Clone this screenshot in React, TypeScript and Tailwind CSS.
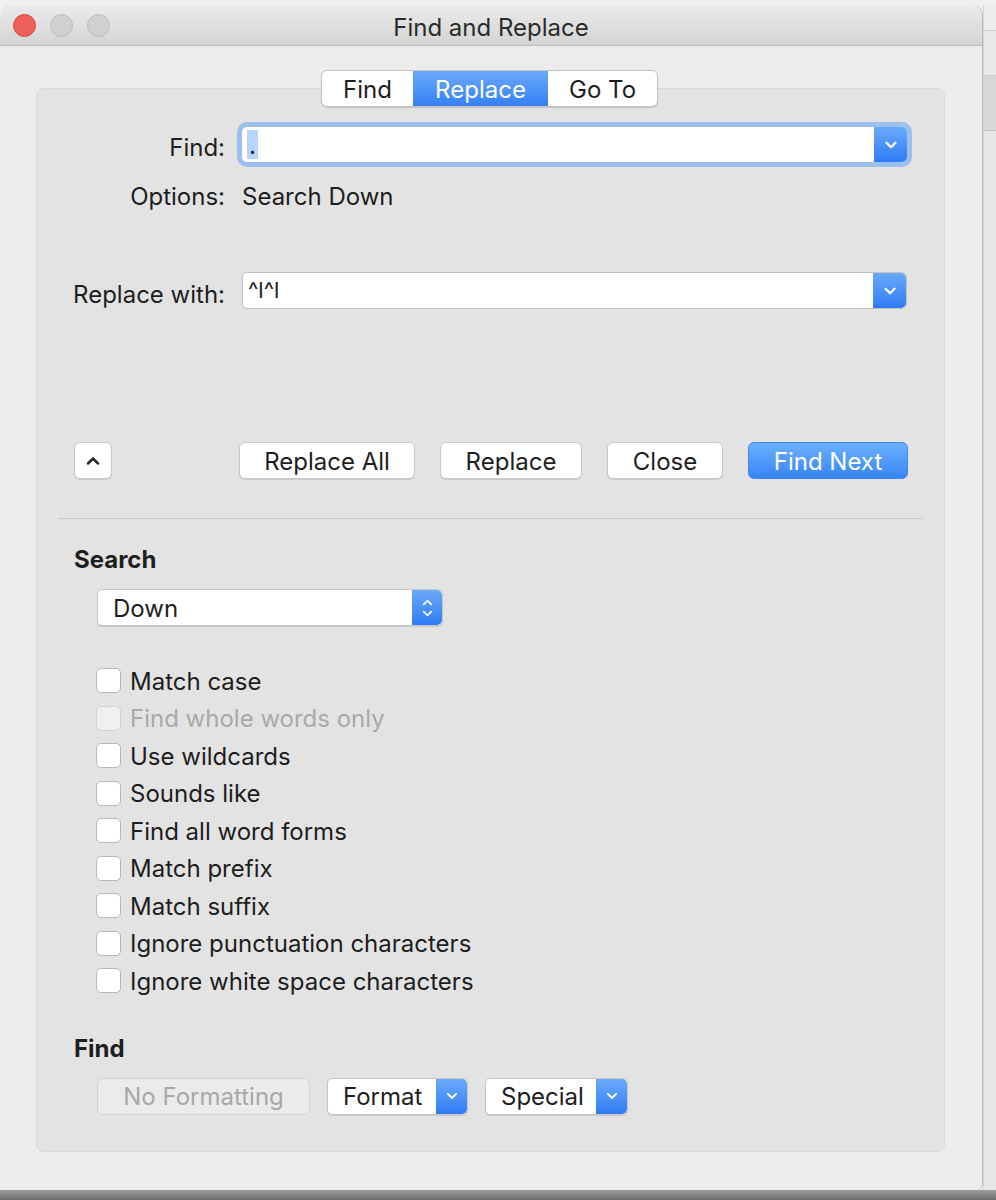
import { ChevronDown, ChevronUp } from "lucide-react"

const options = [
  { label: "Match case", disabled: false },
  { label: "Find whole words only", disabled: true },
  { label: "Use wildcards", disabled: false },
  { label: "Sounds like", disabled: false },
  { label: "Find all word forms", disabled: false },
  { label: "Match prefix", disabled: false },
  { label: "Match suffix", disabled: false },
  { label: "Ignore punctuation characters", disabled: false },
  { label: "Ignore white space characters", disabled: false },
]

function BlueChevron() {
  return (
    <div className="w-[33px] h-full flex items-center justify-center rounded-r-[5px] bg-gradient-to-b from-[#6aa9f9] to-[#2f7bf5]">
      <ChevronDown size={18} strokeWidth={3} className="text-white" />
    </div>
  )
}

function PushButton({ label, width }: { label: string; width: string }) {
  return (
    <button
      className={`${width} h-[37px] rounded-[6px] bg-white border border-[#c9c9c9] shadow-[0_1px_1px_rgba(0,0,0,0.12)] text-[24px] text-[#1e1e1e] flex items-center justify-center pt-[2px]`}
    >
      {label}
    </button>
  )
}

export default function App() {
  return (
    <div className="w-[996px] h-[1200px] bg-[#f0f0f0] overflow-hidden font-[Inter,sans-serif] text-[#1e1e1e]">

      <div className="flex pt-[5px]">

        {/* WINDOW */}

        <div className="w-[983px] h-[1185px] bg-[#ececec] rounded-t-[10px] rounded-br-[6px] border-r border-[#b8b8b8] flex flex-col">

          {/* Title bar */}

          <div className="h-[41px] rounded-t-[10px] bg-gradient-to-b from-[#ebebeb] to-[#d4d4d4] border-b border-[#bdbdbd] flex items-center relative">
            <div className="flex items-center gap-[14px] pl-[13px]">
              <span className="w-[23px] h-[23px] rounded-full bg-[#f0605a] border border-[#dc4b45]" />
              <span className="w-[23px] h-[23px] rounded-full bg-[#d0d0d0] border border-[#bdbdbd]" />
              <span className="w-[23px] h-[23px] rounded-full bg-[#d0d0d0] border border-[#bdbdbd]" />
            </div>
            <div className="absolute inset-0 flex items-center justify-center text-[24px] text-[#2b2b2b] pt-[5px]">
              Find and Replace
            </div>
          </div>

          {/* Tabs */}

          <div className="pt-[24px] flex justify-center relative z-10 -mb-[19px] pr-[3px]">
            <div className="flex h-[37px] rounded-[6px] border border-[#c4c4c4] bg-white shadow-[0_1px_1px_rgba(0,0,0,0.15)] overflow-hidden text-[24px]">
              <div className="w-[91px] flex items-center justify-center pt-[2px]">Find</div>
              <div className="w-[135px] flex items-center justify-center pt-[2px] text-white bg-gradient-to-b from-[#69a8f9] to-[#3580f6]">Replace</div>
              <div className="w-[109px] flex items-center justify-center pt-[2px]">Go To</div>
            </div>
          </div>

          {/* PANEL */}

          <div className="ml-[36px] w-[909px] h-[1064px] rounded-[8px] bg-[#e3e3e3] border border-[#d9d9d9] flex flex-col pt-[38px]">

            {/* Find */}

            <div className="flex items-center h-[35px]">
              <div className="w-[188px] text-right text-[24px] pt-[6px]">Find:</div>
              <div className="ml-[17px] w-[665px] h-[35px] flex rounded-[5px] bg-white shadow-[0_0_0_5px_#9dbfec]">
                <div className="flex-1 flex items-center pl-[5px]">
                  <span className="bg-[#b4d5fe] h-[29px] w-[11px] text-[24px] leading-[32px] pl-[2px]">.</span>
                </div>
                <BlueChevron />
              </div>
            </div>

            {/* Options */}

            <div className="flex items-center h-[28px] mt-[21px] text-[24px]">
              <div className="w-[188px] text-right">Options:</div>
              <div className="ml-[17px]">Search Down</div>
            </div>

            {/* Replace with */}

            <div className="flex items-center h-[37px] mt-[61px]">
              <div className="w-[188px] text-right text-[24px] pt-[9px]">Replace with:</div>
              <div className="ml-[17px] w-[665px] h-[37px] flex rounded-[5px] bg-white border border-[#c2c2c2]">
                <div className="flex-1 flex items-center pl-[5px] text-[22px]">^l^l</div>
                <BlueChevron />
              </div>
            </div>

            {/* Action buttons */}

            <div className="flex items-center mt-[133px] pl-[37px]">
              <button className="w-[38px] h-[37px] rounded-[6px] bg-white border border-[#c9c9c9] shadow-[0_1px_1px_rgba(0,0,0,0.12)] flex items-center justify-center">
                <ChevronUp size={20} strokeWidth={3} className="text-[#2a2a2a]" />
              </button>
              <div className="ml-[127px] flex gap-[25px]">
                <PushButton label="Replace All" width="w-[176px]" />
                <PushButton label="Replace" width="w-[142px]" />
                <PushButton label="Close" width="w-[116px]" />
                <button className="w-[160px] h-[37px] rounded-[6px] border border-[#3f86f0] bg-gradient-to-b from-[#6cb0fb] to-[#3784f7] text-white text-[24px] flex items-center justify-center pt-[2px]">
                  Find Next
                </button>
              </div>
            </div>

            {/* Separator */}

            <div className="mt-[39px] mx-[21px] h-[1px] bg-[#c8c8c8]" />

            {/* Search */}

            <div className="mt-[27px] pl-[37px] h-[28px] flex items-center text-[24px] font-bold">Search</div>

            <div className="mt-[15px] ml-[60px] w-[346px] h-[37px] flex rounded-[5px] bg-white border border-[#c6c6c6] shadow-[0_1px_1px_rgba(0,0,0,0.12)]">
              <div className="flex-1 flex items-center pl-[15px] pt-[2px] text-[24px]">Down</div>
              <div className="w-[30px] h-full flex flex-col items-center justify-center rounded-r-[5px] bg-gradient-to-b from-[#6aa9f9] to-[#2f7bf5]">
                <ChevronUp size={15} strokeWidth={2.5} className="text-white -mb-[2px]" />
                <ChevronDown size={15} strokeWidth={2.5} className="text-white -mt-[2px]" />
              </div>
            </div>

            {/* Checkboxes */}

            <div className="mt-[36px] flex flex-col">
              {options.map((opt) => (
                <div key={opt.label} className="h-[37.5px] flex items-center pl-[59px]">
                  <span
                    className={`w-[25px] h-[25px] rounded-[5px] border ${
                      opt.disabled ? "bg-[#efefef] border-[#d3d3d3]" : "bg-white border-[#b7b7b7]"
                    }`}
                  />
                  <span className={`ml-[9px] pt-[2px] text-[24px] ${opt.disabled ? "text-[#a9a9a9]" : ""}`}>
                    {opt.label}
                  </span>
                </div>
              ))}
            </div>

            {/* Find formatting */}

            <div className="mt-[35px] pl-[37px] h-[28px] flex items-center text-[24px] font-bold">Find</div>

            <div className="mt-[15px] ml-[60px] flex gap-[17px]">
              <button className="w-[213px] h-[37px] rounded-[6px] bg-[#ebebeb] border border-[#d2d2d2] text-[#a8a8a8] text-[24px] flex items-center justify-center pt-[2px]">
                No Formatting
              </button>
              <div className="w-[141px] h-[37px] flex rounded-[5px] bg-white border border-[#c6c6c6] shadow-[0_1px_1px_rgba(0,0,0,0.12)]">
                <div className="flex-1 flex items-center pl-[15px] pt-[2px] text-[24px]">Format</div>
                <div className="w-[31px] h-full flex items-center justify-center rounded-r-[5px] bg-gradient-to-b from-[#6aa9f9] to-[#2f7bf5]">
                  <ChevronDown size={16} strokeWidth={3} className="text-white" />
                </div>
              </div>
              <div className="w-[143px] h-[37px] flex rounded-[5px] bg-white border border-[#c6c6c6] shadow-[0_1px_1px_rgba(0,0,0,0.12)]">
                <div className="flex-1 flex items-center pl-[15px] pt-[2px] text-[24px]">Special</div>
                <div className="w-[31px] h-full flex items-center justify-center rounded-r-[5px] bg-gradient-to-b from-[#6aa9f9] to-[#2f7bf5]">
                  <ChevronDown size={16} strokeWidth={3} className="text-white" />
                </div>
              </div>
            </div>

          </div>

        </div>

        {/* Background app to the right */}

        <div className="flex-1 flex flex-col bg-[#ececec] border-l border-[#d6d6d6]">
          <div className="h-[25px]" />
          <div className="h-[46px] border-y border-[#cfcfcf] bg-[#e9e9e9]" />
          <div className="h-[55px] bg-[#d8d8d8] border-b border-[#c4c4c4]" />
          <div className="flex-1 bg-[#e6e6e6]" />
        </div>

      </div>

      {/* Shadow under the window */}

      <div className="h-[10px] bg-gradient-to-b from-[#9c9c9c] to-[#6e6e6e]" />

    </div>
  )
}
